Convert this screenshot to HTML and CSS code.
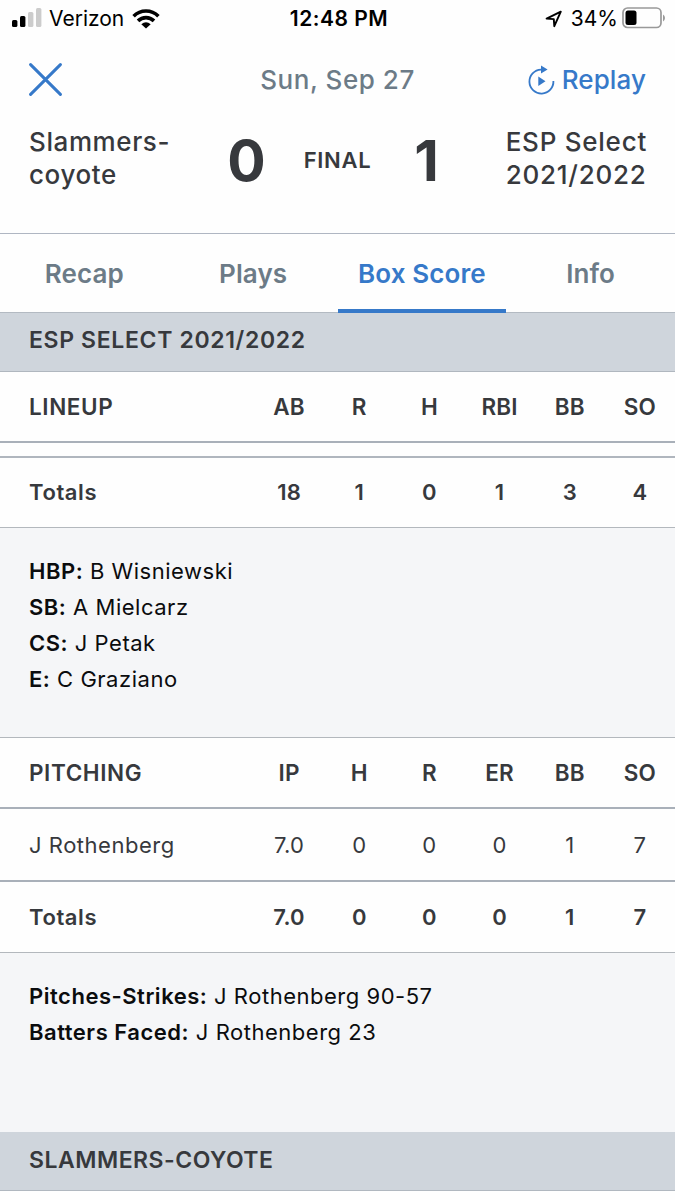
FILE: index.html
```html
<!DOCTYPE html>
<html lang="en">
<head>
<meta charset="utf-8">
<title>Box Score</title>
<link rel="stylesheet" href="styles.css">
</head>
<body>
<div class="status">
  <div class="status-left">
    <svg class="signal" width="30" height="20" viewBox="0 0 30 20"><rect x="0" y="12" width="5.4" height="7" rx="1.5"/><rect x="8" y="8" width="5.4" height="11" rx="1.5"/><rect x="16" y="4" width="5.4" height="15" rx="1.5" fill="#ccc"/><rect x="24" y="0" width="5.4" height="19" rx="1.5" fill="#ccc"/></svg>
    <span class="carrier">Verizon</span>
    <svg class="wifi" width="28" height="20" viewBox="0 0 28 20"><g fill="none" stroke="#000" stroke-width="3.6"><path d="M1.6 7.2C8.5 .3 19.500 .3 26.400 7.200"/><path d="M6 11.900C10.500 7.500 17.500 7.500 22 11.900"/></g><path d="M9.300 15.200Q14 11.200 18.700 15.200L14 19.600Z"/></svg>
  </div>
  <div class="time">12:48 PM</div>
  <div class="status-right">
    <svg class="location" width="18" height="18" viewBox="0 0 18 18"><path d="M1.600 8.600L15.800 1.700 9.300 16.200 8.800 9.100Z" fill="none" stroke="#000" stroke-width="1.900" stroke-linejoin="round"/></svg>
    <span class="percent">34%</span>
    <svg class="battery" width="44" height="22" viewBox="0 0 44 22"><rect x="1" y="1" width="38" height="19.500" rx="4.500" fill="none" stroke="#999" stroke-width="1.700"/><rect x="3.500" y="3.500" width="11" height="14.500" rx="2.500"/><path d="M41 7.500Q43 8.500 43 11T41 14.500Z" fill="#999"/></svg>
  </div>
</div>
<header class="header">
  <svg class="close" width="33" height="33" viewBox="0 0 33 33"><path d="M1.600 1.600L31.400 31.400M31.400 1.600L1.600 31.400" stroke="#3679c9" stroke-width="3" stroke-linecap="round"/></svg>
  <div class="date">Sun, Sep 27</div>
  <div class="replay">
    <svg width="27" height="30" viewBox="0 0 27 30"><path d="M15 4.600H13A12 12 0 1 0 25.400 16" fill="none" stroke="#3679c9" stroke-width="1.800"/><path d="M13 .5L19.600 4.500 13 8.500ZM10.300 11.500L17.500 16.200 10.300 20.900Z" fill="#3679c9"/></svg>
    <span class="replay-label">Replay</span>
  </div>
</header>
<section class="score">
  <div class="team away">Slammers-<br>coyote</div>
  <div class="points">0</div>
  <div class="final">FINAL</div>
  <div class="points home-points">1</div>
  <div class="team home">ESP Select<br>2021/2022</div>
</section>
<nav class="tabs">
  <div class="tab">Recap</div><div class="tab">Plays</div><div class="tab active">Box Score</div><div class="tab">Info</div>
</nav>
<h2 class="band">ESP SELECT 2021/2022</h2>
<div class="row head lineup"><span>LINEUP</span><b>AB</b><b>R</b><b>H</b><b>RBI</b><b>BB</b><b>SO</b></div>
<div class="gap"></div>
<div class="row totals"><span>Totals</span><b>18</b><b>1</b><b>0</b><b>1</b><b>3</b><b>4</b></div>
<div class="notes batting">
  <p><b>HBP:</b> B Wisniewski</p>
  <p><b>SB:</b> A Mielcarz</p>
  <p><b>CS:</b> J Petak</p>
  <p><b>E:</b> C Graziano</p>
</div>
<div class="row head"><span>PITCHING</span><b>IP</b><b>H</b><b>R</b><b>ER</b><b>BB</b><b>SO</b></div>
<div class="row player"><span>J Rothenberg</span><b>7.0</b><b>0</b><b>0</b><b>0</b><b>1</b><b>7</b></div>
<div class="row totals staff"><span>Totals</span><b>7.0</b><b>0</b><b>0</b><b>0</b><b>1</b><b>7</b></div>
<div class="notes pitching">
  <p><b>Pitches-Strikes:</b> J Rothenberg 90-57</p>
  <p><b>Batters Faced:</b> J Rothenberg 23</p>
</div>
<h2 class="band last">SLAMMERS-COYOTE</h2>
</body>
</html>
```
FILE: styles.css
```css
* { box-sizing: border-box; }
body { margin: 0; width: 675px; height: 1200px; overflow: hidden; background: #fefefe; color: #37393d; font-family: Inter, "Liberation Sans", sans-serif; font-size: 22px; }
svg { display: block; flex: none; }
h2, p { margin: 0; }

.status { height: 37px; display: grid; grid-template-columns: 1fr auto 1fr; align-items: center; padding: 0 9px 0 12px; color: #000; font-size: 21px; white-space: nowrap; }
.status-left, .status-right { display: flex; align-items: center; }
.status-right { justify-content: flex-end; }
.signal { margin-top: -1px; }
.carrier { margin-left: 7px; }
.wifi { margin: 0 0 0 8px; }
.time { font-weight: 600; letter-spacing: .5px; }
.percent { margin: 0 4px 0 8px; }
.battery { margin-top: -2px; }

.header { height: 83px; display: grid; grid-template-columns: 1fr auto 1fr; align-items: center; padding: 2px 29px 0; font-size: 26px; }
.date { color: #6c7b87; font-weight: 500; letter-spacing: .55px; }
.replay { display: flex; align-items: center; justify-content: flex-end; gap: 7px; color: #3679c9; font-weight: 500; letter-spacing: .1px; }

.score { height: 114px; display: grid; grid-template-columns: 182px 71px 111px 67px 1fr; border-bottom: 1px solid #afb6c2; padding: 5px 29px 0; }
.team { font-size: 26px; line-height: 33px; font-weight: 500; letter-spacing: .6px; }
.home { justify-self: end; letter-spacing: .75px; margin-right: -1px; }
.points { font-size: 57px; line-height: 71px; font-weight: 700; text-align: center; }
.final { font-size: 22px; line-height: 70px; font-weight: 600; text-align: center; letter-spacing: .7px; }

.tabs { height: 79px; display: grid; grid-template-columns: repeat(4, 1fr); border-bottom: 1px solid #b3bac2; }
.tab { height: 79px; padding-top: 23px; line-height: 34px; text-align: center; font-size: 26px; font-weight: 600; letter-spacing: .1px; color: #6c7b87; }
.active { color: #3679c9; border-bottom: 4px solid #3679c9; }

.band { height: 59px; padding-left: 29px; line-height: 55px; background: #cfd5dc; border-bottom: 1px solid #b0b7bf; font-size: 23px; font-weight: 600; letter-spacing: .65px; }
.last { line-height: 57px; letter-spacing: .5px; }
.row { display: grid; grid-template-columns: 225px repeat(6, 1fr); align-items: center; padding: 0 0 1px 29px; font-size: 22px; letter-spacing: .52px; }
.row b { text-align: center; font-weight: inherit; letter-spacing: .2px; }
.head { height: 71px; border-bottom: 2px solid #a9b0b9; font-weight: 600; font-size: 22.5px; letter-spacing: .6px; }
.gap { height: 15px; border-bottom: 2px solid #b0b6be; }
.totals { height: 70px; border-bottom: 1px solid #b3b8bd; font-weight: 600; letter-spacing: .6px; }
.staff { height: 71px; }
.player { height: 73px; border-bottom: 2px solid #a9b0b9; padding-bottom: 0; }
.notes { padding: 25px 29px 0; background: #f5f6f8; color: #0b0c0e; line-height: 36px; font-size: 22px; letter-spacing: .52px; }
.notes b { font-weight: 600; }
.batting { height: 210px; border-bottom: 1px solid #b3b8bd; }
.pitching { height: 179px; }
```
